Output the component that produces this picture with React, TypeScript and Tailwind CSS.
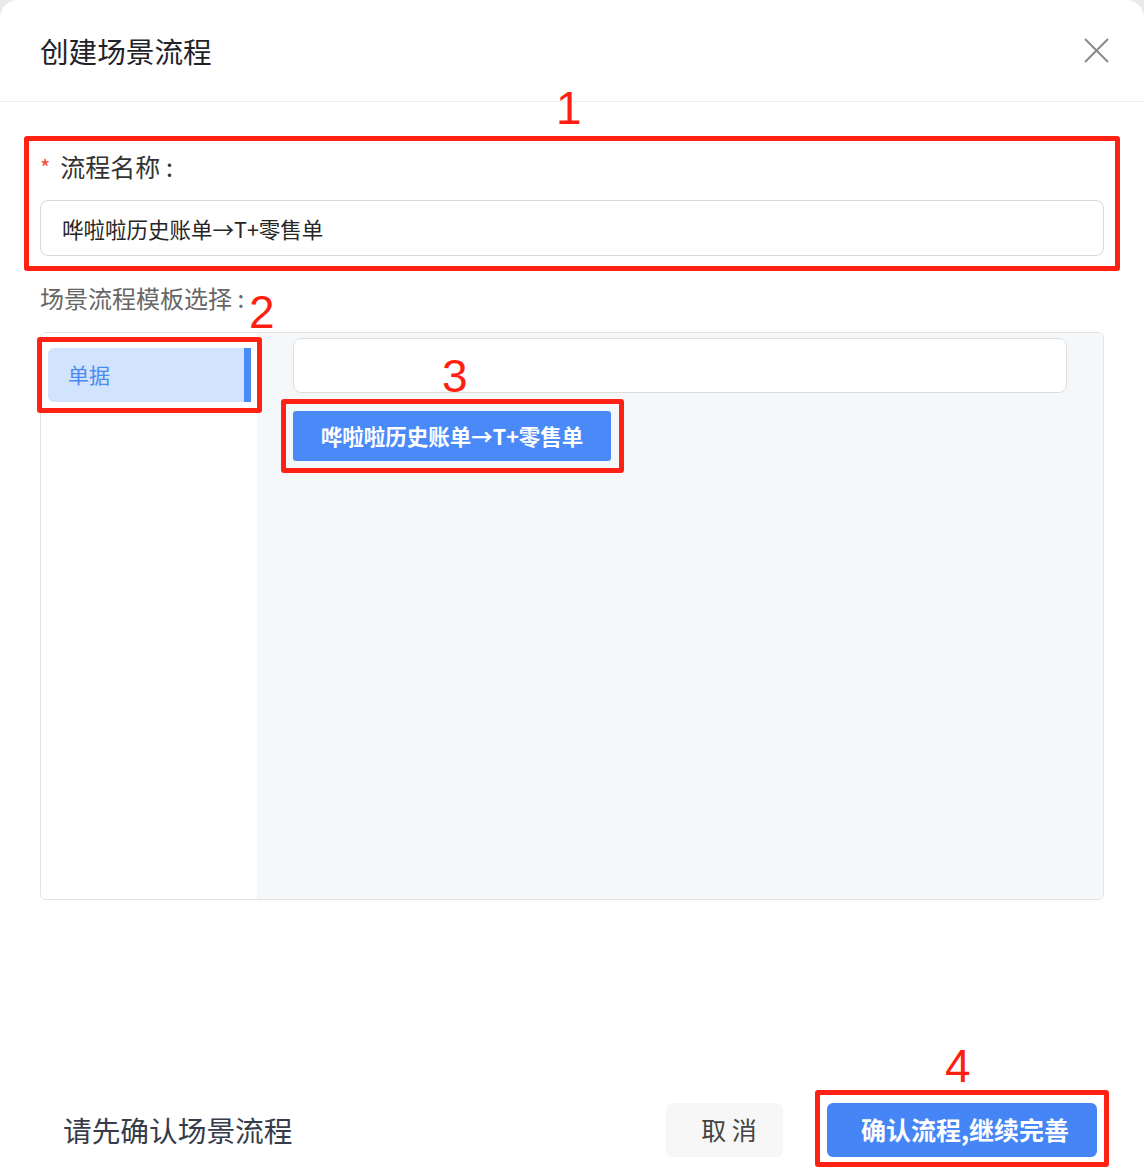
import React, { useState } from "react";

const cjk = "font-['Noto_Sans_CJK_SC',sans-serif]";

const Mark: React.FC<{ n: string; className: string }> = ({ n, className }) => (
  <span
    className={`absolute font-['Liberation_Sans',sans-serif] text-[46px] leading-none text-[#ff1f12] ${className}`}
  >
    {n}
  </span>
);

const Box: React.FC<{ className: string }> = ({ className }) => (
  <div className={`pointer-events-none absolute rounded-[3px] border-[5px] border-[#ff2114] ${className}`} />
);

export default function App() {
  const [name, setName] = useState("哗啦啦历史账单→T+零售单");
  const [search, setSearch] = useState("");

  return (
    <div className={`relative h-[1176px] w-[1144px] overflow-hidden bg-[#e9e9e9] ${cjk}`}>
      <div className="flex h-full flex-col rounded-t-[18px] bg-white">
        {/* Header */}
        <div className="flex h-[102px] shrink-0 items-center justify-between border-b border-[#ececec] pl-[40px] pr-[33px]">
          <h1 className="text-[28.6px] leading-[36px] text-[#1f2329]">创建场景流程</h1>
          <button className="flex h-[30px] w-[30px] items-center justify-center text-[#8a8a8a]">
            <svg width="25" height="25" viewBox="0 0 25 25" fill="none" stroke="currentColor" strokeWidth="2">
              <path d="M1 1L24 24M24 1L1 24" />
            </svg>
          </button>
        </div>

        {/* Body */}
        <div className="flex flex-col px-[40px] pt-[48px]">
          <label className="flex h-[32px] items-center text-[25px] leading-[32px] text-[#333]">
            <span className="mr-[10px] text-[22px] text-[#f5483b]">*</span>
            流程名称 :
          </label>
          <input
            value={name}
            onChange={(e) => setName(e.target.value)}
            className="mt-[18px] h-[56px] rounded-[8px] border border-[#d9d9d9] px-[21px] text-[21.5px] text-[#262626] outline-none"
          />

          <div className="mt-[26px] h-[32px] text-[24px] leading-[32px] text-[#666]">场景流程模板选择 :</div>

          <div className="mt-[18px] flex h-[568px] overflow-hidden rounded-[6px] border border-[#e3e3e3]">
            <div className="w-[216px] shrink-0 bg-white pl-[7px] pr-[6px] pt-[15px]">
              <div className="flex h-[54px] items-center justify-between rounded-l-[6px] bg-[#d1e3fd] pl-[20px]">
                <span className="text-[21px] text-[#4a8af4]">单据</span>
                <span className="h-full w-[7px] bg-[#4a8af4]" />
              </div>
            </div>
            <div className="flex-1 bg-[#f5f8fb] pl-[36px] pr-[36px] pt-[5px]">
              <input
                value={search}
                onChange={(e) => setSearch(e.target.value)}
                className="h-[55px] w-full rounded-[8px] border border-[#dcdcdc] bg-white px-[16px] text-[20px] outline-none"
              />
              <button className="mt-[18px] flex h-[50px] w-[318px] items-center justify-center rounded-[3px] bg-[#4a8af8] text-[21.5px] font-semibold text-white">
                哗啦啦历史账单→T+零售单
              </button>
            </div>
          </div>
        </div>

        <div className="flex-1" />

        {/* Footer */}
        <div className="flex items-center justify-between pb-[19px] pl-[63px] pr-[47px]">
          <span className="text-[28.7px] text-[#363c4a]">请先确认场景流程</span>
          <div className="flex items-center gap-[44px]">
            <button className="h-[54px] w-[117px] rounded-[6px] bg-[#f7f7f7] pl-[9px] text-[25px] text-[#444]">取 消</button>
            <button className="h-[54px] w-[270px] rounded-[6px] bg-[#4585f6] pl-[6px] text-[25px] font-semibold text-white">
              确认流程,继续完善
            </button>
          </div>
        </div>
      </div>

      {/* Annotations */}
      <Box className="left-[24px] top-[136px] h-[135px] w-[1096px]" />
      <Mark n="1" className="left-[556px] top-[85px]" />
      <Box className="left-[37px] top-[337px] h-[76px] w-[225px]" />
      <Mark n="2" className="left-[249px] top-[289px]" />
      <Box className="left-[281px] top-[399px] h-[74px] w-[343px]" />
      <Mark n="3" className="left-[442px] top-[353px]" />
      <Box className="left-[815px] top-[1090px] h-[77px] w-[294px]" />
      <Mark n="4" className="left-[945px] top-[1043px]" />
    </div>
  );
}
